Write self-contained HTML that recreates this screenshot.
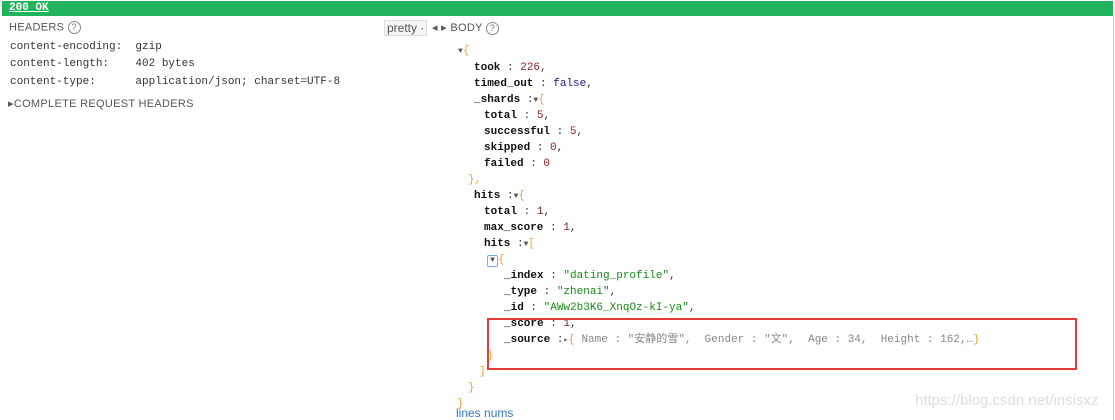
<!DOCTYPE html><html><head><meta charset="utf-8"><style>
body{margin:0;width:1115px;height:420px;background:#fff;overflow:hidden;position:relative;font-family:"Liberation Mono","Noto Sans CJK SC",monospace;font-size:11px;color:#333}
.a{position:absolute;white-space:pre}
.l{position:absolute;white-space:pre;height:16px;line-height:16px}
.bar{position:absolute;left:2px;top:1px;width:1111px;height:15px;background:#22b45c}
.bar span{position:absolute;left:7px;top:1px;color:#fff;font-weight:bold;text-decoration:underline;font-size:11px}
.sec{font-family:"Liberation Sans",sans-serif;font-size:11px;color:#555;letter-spacing:.3px}
.q{display:inline-block;width:11px;height:11px;border:1px solid #888;border-radius:50%;font-size:9px;text-align:center;line-height:11px;color:#777;vertical-align:middle}
.k{color:#111;font-weight:bold}
.n{color:#8b1a1a}.s{color:#1a8a1a}.b{color:#1a1a8a}.o{color:#f0a030}.g{color:#888}
.t{font-size:8px;color:#555}
</style></head><body>
<div class="bar"><span>200 OK</span></div>
<div style="position:absolute;right:1px;top:16px;width:1px;height:404px;background:#ccc"></div>
<div class="a sec" style="left:9px;top:21px">HEADERS <span class="q">?</span></div>
<div class="a" style="left:384px;top:20px;border:1px solid #ddd;background:#f6f6f6;font-family:'Liberation Sans',sans-serif;font-size:12px;color:#555;padding:0 2px;height:14px;line-height:14px">pretty ·</div>
<div class="a sec" style="left:432px;top:21px">◂ ▸ BODY <span class="q">?</span></div>
<div class="a" style="left:10px;top:41px">content-encoding:  gzip</div>
<div class="a" style="left:10px;top:58px">content-length:    402 bytes</div>
<div class="a" style="left:10px;top:76px">content-type:      application/json; charset=UTF-8</div>
<div class="a sec" style="left:8px;top:97px">▸COMPLETE REQUEST HEADERS</div>

<div class="l" style="left:458px;top:43px"><span class="t">▼</span><span class="o">{</span></div>
<div class="l" style="left:474px;top:60px"><span class="k">took</span> : <span class="n">226</span>,</div>
<div class="l" style="left:474px;top:76px"><span class="k">timed_out</span> : <span class="b">false</span>,</div>
<div class="l" style="left:474px;top:92px"><span class="k">_shards</span> :<span class="t">▼</span><span class="o">{</span></div>
<div class="l" style="left:484px;top:108px"><span class="k">total</span> : <span class="n">5</span>,</div>
<div class="l" style="left:484px;top:124px"><span class="k">successful</span> : <span class="n">5</span>,</div>
<div class="l" style="left:484px;top:140px"><span class="k">skipped</span> : <span class="n">0</span>,</div>
<div class="l" style="left:484px;top:156px"><span class="k">failed</span> : <span class="n">0</span></div>
<div class="l" style="left:468px;top:172px"><span class="o">},</span></div>
<div class="l" style="left:474px;top:188px"><span class="k">hits</span> :<span class="t">▼</span><span class="o">{</span></div>
<div class="l" style="left:484px;top:204px"><span class="k">total</span> : <span class="n">1</span>,</div>
<div class="l" style="left:484px;top:220px"><span class="k">max_score</span> : <span class="n">1</span>,</div>
<div class="l" style="left:484px;top:236px"><span class="k">hits</span> :<span class="t">▼</span><span class="o">[</span></div>
<div class="l" style="left:487px;top:252px"><span class="t" style="display:inline-block;width:9px;height:10px;line-height:10px;border:1px solid #7aa7f0;border-radius:2px;text-align:center">▼</span><span class="o">{</span></div>
<div class="l" style="left:504px;top:268px"><span class="k">_index</span> : <span class="s">"dating_profile"</span>,</div>
<div class="l" style="left:504px;top:284px"><span class="k">_type</span> : <span class="s">"zhenai"</span>,</div>
<div class="l" style="left:504px;top:300px"><span class="k">_id</span> : <span class="s">"AWw2b3K6_XnqOz-kI-ya"</span>,</div>
<div class="l" style="left:504px;top:316px"><span class="k">_score</span> : <span class="n">1</span>,</div>
<div class="l" style="left:504px;top:332px"><span class="k">_source</span> :<span class="t">▸</span><span class="o">{</span><span class="g"> Name : "安静的雪",  Gender : "文",  Age : 34,  Height : 162,…</span><span class="o">}</span></div>
<div class="l" style="left:487px;top:348px"><span class="o">}</span></div>
<div class="l" style="left:479px;top:364px"><span class="o">]</span></div>
<div class="l" style="left:468px;top:380px"><span class="o">}</span></div>
<div class="l" style="left:457px;top:396px"><span class="o">}</span></div>

<div class="a" style="left:487px;top:318px;width:586px;height:48px;border:2px solid #e83a3a"></div>
<div class="a" style="left:456px;top:406px;font-family:'Liberation Sans',sans-serif;font-size:12px;color:#3377cc">lines nums</div>
<div class="a" style="left:915px;top:392px;font-family:'Liberation Sans',sans-serif;font-size:15px;color:#ddd">https://blog.csdn.net/insisxz</div>
</body></html>
